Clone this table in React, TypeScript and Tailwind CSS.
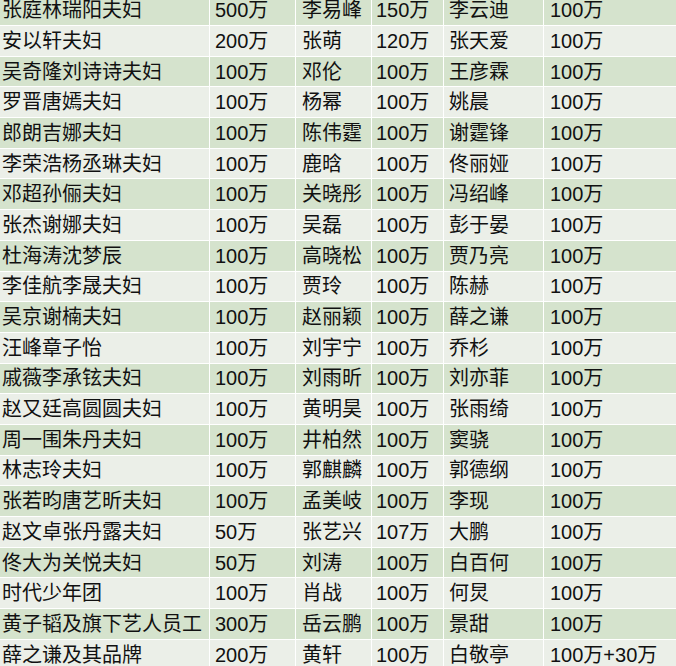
import React from 'react';

const ROWS: string[][] = [
  ['张庭林瑞阳夫妇', '500万', '李易峰', '150万', '李云迪', '100万'],
  ['安以轩夫妇', '200万', '张萌', '120万', '张天爱', '100万'],
  ['吴奇隆刘诗诗夫妇', '100万', '邓伦', '100万', '王彦霖', '100万'],
  ['罗晋唐嫣夫妇', '100万', '杨幂', '100万', '姚晨', '100万'],
  ['郎朗吉娜夫妇', '100万', '陈伟霆', '100万', '谢霆锋', '100万'],
  ['李荣浩杨丞琳夫妇', '100万', '鹿晗', '100万', '佟丽娅', '100万'],
  ['邓超孙俪夫妇', '100万', '关晓彤', '100万', '冯绍峰', '100万'],
  ['张杰谢娜夫妇', '100万', '吴磊', '100万', '彭于晏', '100万'],
  ['杜海涛沈梦辰', '100万', '高晓松', '100万', '贾乃亮', '100万'],
  ['李佳航李晟夫妇', '100万', '贾玲', '100万', '陈赫', '100万'],
  ['吴京谢楠夫妇', '100万', '赵丽颖', '100万', '薛之谦', '100万'],
  ['汪峰章子怡', '100万', '刘宇宁', '100万', '乔杉', '100万'],
  ['戚薇李承铉夫妇', '100万', '刘雨昕', '100万', '刘亦菲', '100万'],
  ['赵又廷高圆圆夫妇', '100万', '黄明昊', '100万', '张雨绮', '100万'],
  ['周一围朱丹夫妇', '100万', '井柏然', '100万', '窦骁', '100万'],
  ['林志玲夫妇', '100万', '郭麒麟', '100万', '郭德纲', '100万'],
  ['张若昀唐艺昕夫妇', '100万', '孟美岐', '100万', '李现', '100万'],
  ['赵文卓张丹露夫妇', '50万', '张艺兴', '107万', '大鹏', '100万'],
  ['佟大为关悦夫妇', '50万', '刘涛', '100万', '白百何', '100万'],
  ['时代少年团', '100万', '肖战', '100万', '何炅', '100万'],
  ['黄子韬及旗下艺人员工', '300万', '岳云鹏', '100万', '景甜', '100万'],
  ['薛之谦及其品牌', '200万', '黄轩', '100万', '白敬亭', '100万+30万'],
];

const PAD = ['pl-[2px]', 'pl-[5px]', 'pl-[6px]', 'pl-[4px]', 'pl-[5px]', 'pl-[6px]'];

export default function App() {
  return (
    <div
      className="w-[676px] h-[666px] overflow-hidden bg-white"
      style={{ fontFamily: '"Liberation Sans", "Noto Sans CJK SC", sans-serif' }}
    >
      <div className="mt-[-4.7px] grid grid-cols-[209px_85px_75px_71px_99px_1fr] gap-px bg-white rounded-tr-[6px] overflow-hidden">
        {ROWS.map((row, i) =>
          row.map((cell, j) => (
            <div
              key={`${i}-${j}`}
              className={`${i % 2 === 0 ? 'bg-[#d5e3cd]' : 'bg-[#ebefe8]'} ${PAD[j]} h-[29.7px] flex items-center text-[20px] leading-none text-[#111] whitespace-nowrap`}
            >
              {cell}
            </div>
          ))
        )}
      </div>
    </div>
  );
}
